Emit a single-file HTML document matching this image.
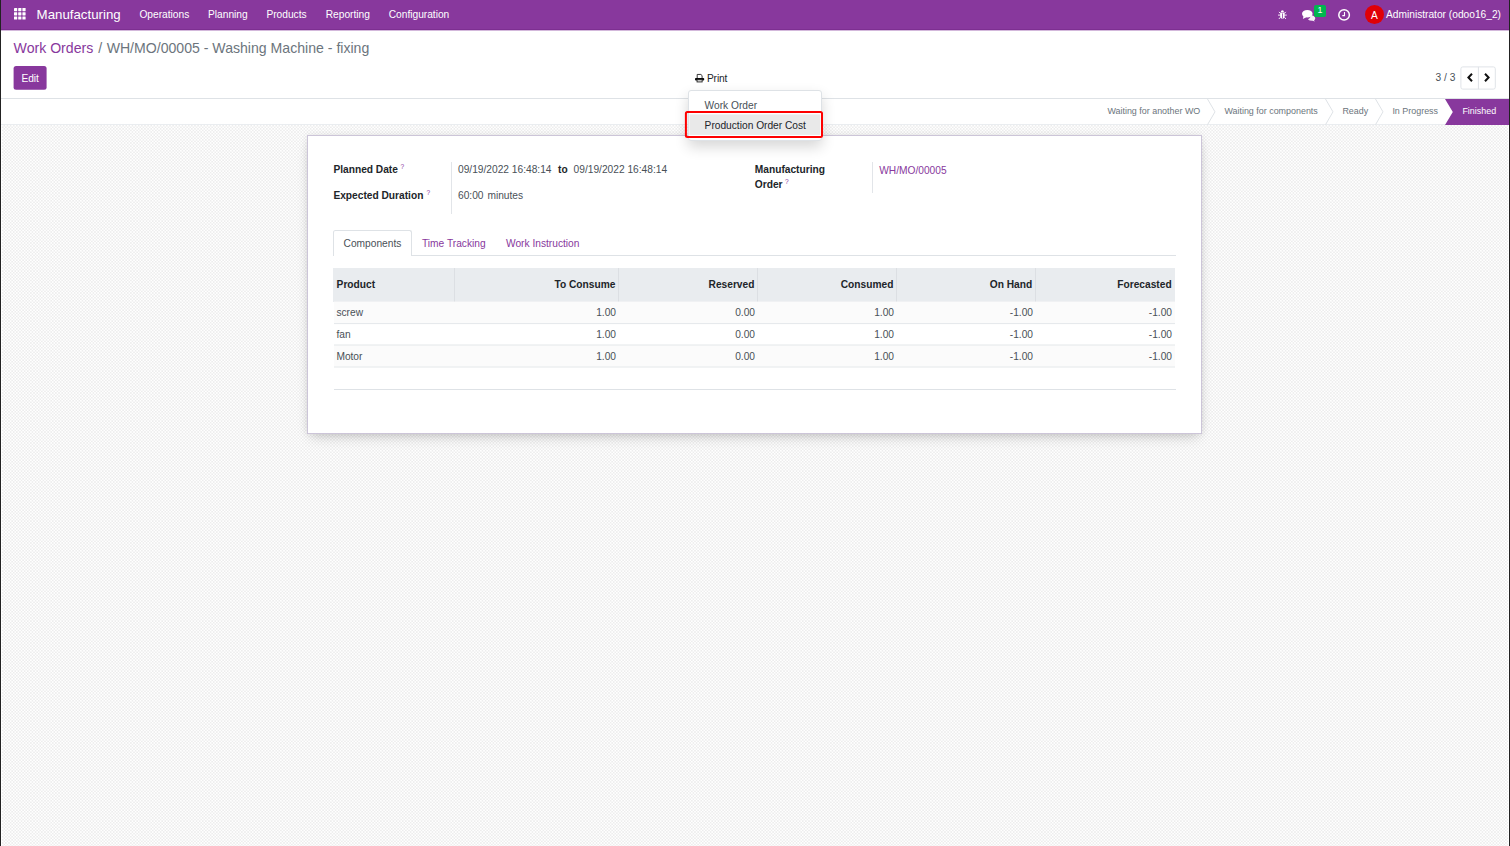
<!DOCTYPE html>
<html lang="en">
<head>
<meta charset="utf-8">
<title>Odoo - Work Orders</title>
<style>
*{box-sizing:border-box;margin:0;padding:0}
html,body{width:1510px;height:846px;overflow:hidden;background:#fff}
body{font-family:"Liberation Sans",Arial,sans-serif;font-size:10.2px;color:#4c4c4c;position:relative;line-height:1}
.abs{position:absolute}
.t{position:absolute;white-space:nowrap;line-height:1}
#bg{left:2px;top:125px;width:1506px;height:721px;background-color:#f7f7f8;
 background-image:conic-gradient(#ededed 25%,#fff 0 50%,#ededed 0 75%,#fff 0);background-size:3.14px 3.14px}
#edge{left:0;top:0;width:1px;height:846px;background:#222;z-index:50}
#edge2{left:1509px;top:0;width:1px;height:846px;background:#222;z-index:50}
#nav{left:0;top:0;width:1510px;height:30px;background:#88389d;border-bottom:1px solid #7d2f91}
#nav2{left:0;top:30px;width:1510px;height:1px;background:#d3b8db}
#cp{left:0;top:30px;width:1510px;height:68px;background:#fff}
#cpline{left:0;top:97.5px;width:1510px;height:1px;background:#dee2e6}
#sb{left:0;top:98.5px;width:1510px;height:25.5px;background:#fff}
#sbline{left:0;top:124px;width:1510px;height:1px;background:#eaedf0}
.btn-edit{left:13.3px;top:66px;width:33.2px;height:23.8px;background:#88389d;border-radius:2.5px}
#sheet{left:307px;top:135px;width:895px;height:298.5px;background:#fff;border:1px solid #ccc5d8;box-shadow:0 6px 13px -4px rgba(0,0,0,.2), 0 0 7px rgba(0,0,0,.07)}
svg{position:absolute;overflow:visible}
</style>
</head>
<body>
<div id="bg" class="abs"></div>
<div id="nav" class="abs"></div>
<svg style="left:14.4px;top:8.3px" width="12" height="12" fill="#fff"><rect x="0.0" y="0.0" width="3.2" height="3.2" rx="0.4"/><rect x="4.2" y="0.0" width="3.2" height="3.2" rx="0.4"/><rect x="8.4" y="0.0" width="3.2" height="3.2" rx="0.4"/><rect x="0.0" y="4.2" width="3.2" height="3.2" rx="0.4"/><rect x="4.2" y="4.2" width="3.2" height="3.2" rx="0.4"/><rect x="8.4" y="4.2" width="3.2" height="3.2" rx="0.4"/><rect x="0.0" y="8.4" width="3.2" height="3.2" rx="0.4"/><rect x="4.2" y="8.4" width="3.2" height="3.2" rx="0.4"/><rect x="8.4" y="8.4" width="3.2" height="3.2" rx="0.4"/></svg>
<span class="t" style="top:7.76px;font-size:13.28px;left:36.60px;color:#fff;">Manufacturing</span>
<span class="t" style="top:10.17px;font-size:10.2px;left:139.40px;color:#fff;">Operations</span>
<span class="t" style="top:10.17px;font-size:10.2px;left:208.00px;color:#fff;">Planning</span>
<span class="t" style="top:10.17px;font-size:10.2px;left:266.40px;color:#fff;">Products</span>
<span class="t" style="top:10.17px;font-size:10.2px;left:325.70px;color:#fff;">Reporting</span>
<span class="t" style="top:10.17px;font-size:10.2px;left:388.70px;color:#fff;">Configuration</span>
<span class="t" style="top:10.17px;font-size:10.2px;left:1386.00px;color:#fff;">Administrator (odoo16_2)</span>
<svg style="left:1277.6px;top:10px" width="8.8" height="9.4" viewBox="0 0 8.8 9.4"><g fill="#fff"><path d="M2.9 1.9 a1.5 1.7 0 0 1 3 0 z"/><path d="M2.2 2.6 h4.4 v3.6 a2.2 2.6 0 0 1 -4.4 0 z"/></g><g stroke="#fff" stroke-width="0.9" fill="none"><path d="M0 5.1 H8.8 M0.9 1.9 L2.4 3.4 M7.9 1.9 L6.4 3.4 M0.9 9 L2.4 7.2 M7.9 9 L6.4 7.2"/></g><rect x="4" y="3.4" width="0.8" height="5" fill="#88389d"/></svg>
<svg style="left:1301.6px;top:9.6px" width="13.4" height="10.8" viewBox="0 0 13.4 10.8"><g fill="#fff"><path d="M8.4 5.2 a4.3 3.3 0 0 1 4.9 3 a3.2 2.6 0 0 1 -1.3 2 l0.9 1.3 l-2.4 -0.7 a5 3 0 0 1 -4.6 -1.6 a6 4 0 0 0 2.5 -4 z" opacity=".92"/><ellipse cx="5.3" cy="3.8" rx="5.3" ry="3.8"/><path d="M1.6 5.8 L0.9 8.9 L4.2 7.3 z"/></g></svg>
<svg style="left:1338px;top:8.8px" width="12.2" height="11.8" viewBox="0 0 12.2 11.8"><ellipse cx="6.1" cy="5.9" rx="5.3" ry="5.1" fill="none" stroke="#fff" stroke-width="1.5"/><path d="M6.5 3 V6.6 H4.3" fill="none" stroke="#fff" stroke-width="1.1"/></svg>
<div class="abs" style="left:1364.8px;top:4.7px;width:19.4px;height:19.4px;border-radius:50%;background:#e00007"></div>
<span class="t" style="top:11.37px;font-size:10.2px;left:1370.90px;color:#fff;">A</span>
<div class="abs" style="left:1314.3px;top:4.6px;width:11.7px;height:12.3px;border-radius:2px;background:#00b74f"></div>
<span class="t" style="top:6.15px;font-size:8.8px;left:1317.60px;color:#fff;">1</span>
<div id="cp" class="abs"></div><div id="nav2" class="abs"></div><div id="cpline" class="abs"></div><div id="sb" class="abs"></div><div id="sbline" class="abs"></div>
<span class="t" style="top:41.06px;font-size:14.1px;left:13.60px;color:#6c757d;"><span style="color:#88389d">Work Orders</span><span style="padding:0 4.4px 0 5.1px">/</span>WH/MO/00005 - Washing Machine - fixing</span>
<svg style="left:11px;top:64px;" width="39" height="30"><rect x="2.60" y="2.00" width="33.00" height="23.80" rx="2.5" fill="#88389d"/></svg>
<span class="t" style="top:74.02px;font-size:10.2px;left:21.40px;color:#fff;">Edit</span>
<span class="t" style="top:73.97px;font-size:10.2px;left:706.90px;color:#212529;letter-spacing:-0.1px;">Print</span>
<span class="t" style="top:73.27px;font-size:10.2px;left:1435.60px;color:#495057;">3 / 3</span>
<svg style="left:1458px;top:64px;" width="41" height="29"><rect x="2.90" y="2.90" width="34.40" height="22.20" rx="1.9" fill="#fff" stroke="#e0e4e8" stroke-width="1"/></svg>
<svg style="left:1475px;top:64px;" width="7" height="29"><rect x="2.90" y="2.90" width="1.00" height="22.20" rx="0" fill="#dee2e6"/></svg>
<svg style="left:1466.6px;top:72.9px" width="6" height="9" viewBox="0 0 6 9" fill="none" stroke="#111" stroke-width="2"><path d="M5 0.7 L1.4 4.5 L5 8.3"/></svg>
<svg style="left:1483.6px;top:72.9px" width="6" height="9" viewBox="0 0 6 9" fill="none" stroke="#111" stroke-width="2"><path d="M1 0.7 L4.6 4.5 L1 8.3"/></svg>
<svg style="left:695.2px;top:74px" width="9.2" height="8.4" viewBox="0 0 9.2 8.4"><path d="M2.2 4.4 V0.45 H5.9 L7.1 1.6 V4.4" fill="#fff" stroke="#222" stroke-width="0.9"/><rect x="0" y="3.9" width="9.2" height="2.6" rx="0.9" fill="#0a0a0a"/><rect x="2.05" y="5.75" width="5.1" height="2.2" fill="#eee" stroke="#222" stroke-width="0.9"/></svg>
<svg style="left:1207px;top:98.5px" width="9" height="25.7" viewBox="0 0 9 25.7"><path d="M0.5 0 L8 12.85 L0.5 25.7" fill="none" stroke="#dee2e6" stroke-width="1"/></svg>
<svg style="left:1325px;top:98.5px" width="9" height="25.7" viewBox="0 0 9 25.7"><path d="M0.5 0 L8 12.85 L0.5 25.7" fill="none" stroke="#dee2e6" stroke-width="1"/></svg>
<svg style="left:1375px;top:98.5px" width="9" height="25.7" viewBox="0 0 9 25.7"><path d="M0.5 0 L8 12.85 L0.5 25.7" fill="none" stroke="#dee2e6" stroke-width="1"/></svg>
<svg style="left:1444.6px;top:98.6px" width="65" height="26" viewBox="0 0 65 26"><path d="M0 0 H65 V26 H0 L7.8 13 Z" fill="#88389d"/></svg>
<span class="t" style="top:106.83px;font-size:8.94px;left:1107.40px;color:#6c757d;">Waiting for another WO</span>
<span class="t" style="top:106.83px;font-size:8.94px;left:1224.40px;color:#6c757d;">Waiting for components</span>
<span class="t" style="top:106.83px;font-size:8.94px;left:1342.40px;color:#6c757d;">Ready</span>
<span class="t" style="top:106.83px;font-size:8.94px;left:1392.40px;color:#6c757d;">In Progress</span>
<span class="t" style="top:106.83px;font-size:8.94px;left:1462.40px;color:#fff;">Finished</span>
<div id="sheet" class="abs"></div>
<span class="t" style="top:165.37px;font-size:10.2px;left:333.40px;color:#212529;font-weight:700;">Planned Date</span>
<span class="t" style="top:163.81px;font-size:6.6px;left:400.40px;color:#88389d;">?</span>
<span class="t" style="top:191.37px;font-size:10.2px;left:333.40px;color:#212529;font-weight:700;">Expected Duration</span>
<span class="t" style="top:189.81px;font-size:6.6px;left:426.40px;color:#88389d;">?</span>
<div class="abs" style="left:451px;top:162px;width:1px;height:51.6px;background:#e2e5e9"></div>
<span class="t" style="top:165.37px;font-size:10.2px;left:458.00px;color:#495057;">09/19/2022 16:48:14</span>
<span class="t" style="top:165.37px;font-size:10.2px;left:558.00px;color:#212529;font-weight:700;">to</span>
<span class="t" style="top:165.37px;font-size:10.2px;left:573.60px;color:#495057;">09/19/2022 16:48:14</span>
<span class="t" style="top:191.37px;font-size:10.2px;left:458.00px;color:#495057;">60:00</span>
<span class="t" style="top:191.37px;font-size:10.2px;left:487.40px;color:#495057;">minutes</span>
<span class="t" style="top:165.37px;font-size:10.2px;left:754.80px;color:#212529;font-weight:700;">Manufacturing</span>
<span class="t" style="top:180.37px;font-size:10.2px;left:754.80px;color:#212529;font-weight:700;">Order</span>
<span class="t" style="top:178.81px;font-size:6.6px;left:785.00px;color:#88389d;">?</span>
<div class="abs" style="left:872px;top:162px;width:1px;height:31px;background:#e2e5e9"></div>
<span class="t" style="top:165.77px;font-size:10.2px;left:879.20px;color:#88389d;">WH/MO/00005</span>
<div class="abs" style="left:333.4px;top:255px;width:842.4px;height:1px;background:#dee2e6"></div>
<div class="abs" style="left:333.4px;top:230px;width:78.2px;height:26px;border:1px solid #dee2e6;border-bottom:none;border-radius:2.5px 2.5px 0 0;background:#fff"></div>
<span class="t" style="top:238.57px;font-size:10.2px;left:343.60px;color:#495057;">Components</span>
<span class="t" style="top:238.57px;font-size:10.2px;left:422.00px;color:#88389d;">Time Tracking</span>
<span class="t" style="top:238.57px;font-size:10.2px;left:506.00px;color:#88389d;">Work Instruction</span>
<div class="abs" style="left:333px;top:268px;width:842px;height:33.6px;background:#e9ecef"></div>
<div class="abs" style="left:454px;top:268px;width:1px;height:33.6px;background:#dcdfe3"></div>
<div class="abs" style="left:618px;top:268px;width:1px;height:33.6px;background:#dcdfe3"></div>
<div class="abs" style="left:757px;top:268px;width:1px;height:33.6px;background:#dcdfe3"></div>
<div class="abs" style="left:896px;top:268px;width:1px;height:33.6px;background:#dcdfe3"></div>
<div class="abs" style="left:1035px;top:268px;width:1px;height:33.6px;background:#dcdfe3"></div>
<span class="t" style="top:279.77px;font-size:10.2px;left:336.60px;color:#212529;font-weight:700;">Product</span>
<span class="t" style="top:279.77px;font-size:10.2px;right:894.60px;color:#212529;font-weight:700;">To Consume</span>
<span class="t" style="top:279.77px;font-size:10.2px;right:755.60px;color:#212529;font-weight:700;">Reserved</span>
<span class="t" style="top:279.77px;font-size:10.2px;right:616.60px;color:#212529;font-weight:700;">Consumed</span>
<span class="t" style="top:279.77px;font-size:10.2px;right:477.80px;color:#212529;font-weight:700;">On Hand</span>
<span class="t" style="top:279.77px;font-size:10.2px;right:338.40px;color:#212529;font-weight:700;">Forecasted</span>
<svg style="left:332px;top:299px;" width="847" height="28"><rect x="2.00" y="2.60" width="841.00" height="21.60" rx="0" fill="#fbfbfb"/></svg>
<svg style="left:332px;top:343px;" width="847" height="28"><rect x="2.00" y="2.00" width="841.00" height="21.60" rx="0" fill="#fbfbfb"/></svg>
<svg style="left:332px;top:321px;" width="847" height="7"><rect x="2.00" y="2.10" width="841.00" height="1.00" rx="0" fill="#e4e7ea"/></svg>
<span class="t" style="top:307.77px;font-size:10.2px;left:336.40px;color:#495057;">screw</span>
<span class="t" style="top:307.77px;font-size:10.2px;right:894.00px;color:#495057;">1.00</span>
<span class="t" style="top:307.77px;font-size:10.2px;right:755.00px;color:#495057;">0.00</span>
<span class="t" style="top:307.77px;font-size:10.2px;right:616.00px;color:#495057;">1.00</span>
<span class="t" style="top:307.77px;font-size:10.2px;right:477.00px;color:#495057;">-1.00</span>
<span class="t" style="top:307.77px;font-size:10.2px;right:338.00px;color:#495057;">-1.00</span>
<svg style="left:332px;top:342px;" width="847" height="7"><rect x="2.00" y="2.50" width="841.00" height="1.00" rx="0" fill="#e4e7ea"/></svg>
<span class="t" style="top:329.87px;font-size:10.2px;left:336.40px;color:#495057;">fan</span>
<span class="t" style="top:329.87px;font-size:10.2px;right:894.00px;color:#495057;">1.00</span>
<span class="t" style="top:329.87px;font-size:10.2px;right:755.00px;color:#495057;">0.00</span>
<span class="t" style="top:329.87px;font-size:10.2px;right:616.00px;color:#495057;">1.00</span>
<span class="t" style="top:329.87px;font-size:10.2px;right:477.00px;color:#495057;">-1.00</span>
<span class="t" style="top:329.87px;font-size:10.2px;right:338.00px;color:#495057;">-1.00</span>
<svg style="left:332px;top:364px;" width="847" height="7"><rect x="2.00" y="2.50" width="841.00" height="1.00" rx="0" fill="#e4e7ea"/></svg>
<span class="t" style="top:351.87px;font-size:10.2px;left:336.40px;color:#495057;">Motor</span>
<span class="t" style="top:351.87px;font-size:10.2px;right:894.00px;color:#495057;">1.00</span>
<span class="t" style="top:351.87px;font-size:10.2px;right:755.00px;color:#495057;">0.00</span>
<span class="t" style="top:351.87px;font-size:10.2px;right:616.00px;color:#495057;">1.00</span>
<span class="t" style="top:351.87px;font-size:10.2px;right:477.00px;color:#495057;">-1.00</span>
<span class="t" style="top:351.87px;font-size:10.2px;right:338.00px;color:#495057;">-1.00</span>
<div class="abs" style="left:334px;top:389px;width:842px;height:1px;background:#dee2e6"></div>
<div class="abs" style="left:688.4px;top:90.3px;width:133.4px;height:50.7px;background:#fff;border:1px solid #dee2e6;border-radius:3px;box-shadow:0 6px 14px rgba(0,0,0,.16)"></div>
<span class="t" style="top:101.07px;font-size:10.2px;left:704.60px;color:#495057;">Work Order</span>
<svg style="left:687px;top:112px;" width="137" height="27"><rect x="2.40" y="2.40" width="130.90" height="20.50" rx="0" fill="#e9e9e9"/></svg>
<svg style="left:683px;top:109px;" width="143" height="31"><rect x="2.90" y="2.90" width="136.10" height="25.00" rx="1.5" fill="none" stroke="#fe0000" stroke-width="2"/></svg>
<span class="t" style="top:121.37px;font-size:10.2px;left:704.60px;color:#212529;">Production Order Cost</span>
<div id="edge" class="abs"></div><div id="edge2" class="abs"></div>
</body>
</html>
